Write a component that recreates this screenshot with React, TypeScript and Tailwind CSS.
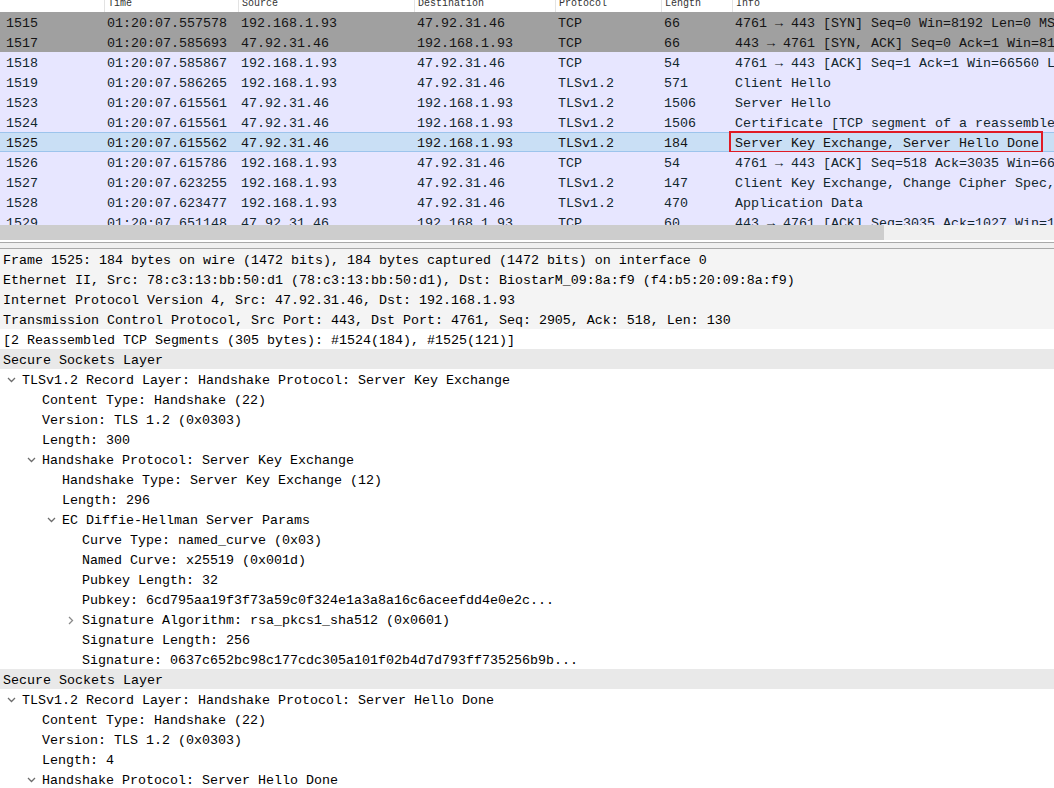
import React from "react";

type Pkt = { no: string; time: string; src: string; dst: string; proto: string; len: string; info: string; kind: "syn" | "tcp" | "sel" };

const pkts: Pkt[] = [
  { no: "1515", time: "01:20:07.557578", src: "192.168.1.93", dst: "47.92.31.46", proto: "TCP", len: "66", info: "4761 → 443 [SYN] Seq=0 Win=8192 Len=0 MSS=1460 WS=4 SACK_PERM=1", kind: "syn" },
  { no: "1517", time: "01:20:07.585693", src: "47.92.31.46", dst: "192.168.1.93", proto: "TCP", len: "66", info: "443 → 4761 [SYN, ACK] Seq=0 Ack=1 Win=8192 Len=0 MSS=1440", kind: "syn" },
  { no: "1518", time: "01:20:07.585867", src: "192.168.1.93", dst: "47.92.31.46", proto: "TCP", len: "54", info: "4761 → 443 [ACK] Seq=1 Ack=1 Win=66560 Len=0", kind: "tcp" },
  { no: "1519", time: "01:20:07.586265", src: "192.168.1.93", dst: "47.92.31.46", proto: "TLSv1.2", len: "571", info: "Client Hello", kind: "tcp" },
  { no: "1523", time: "01:20:07.615561", src: "47.92.31.46", dst: "192.168.1.93", proto: "TLSv1.2", len: "1506", info: "Server Hello", kind: "tcp" },
  { no: "1524", time: "01:20:07.615561", src: "47.92.31.46", dst: "192.168.1.93", proto: "TLSv1.2", len: "1506", info: "Certificate [TCP segment of a reassembled PDU]", kind: "tcp" },
  { no: "1525", time: "01:20:07.615562", src: "47.92.31.46", dst: "192.168.1.93", proto: "TLSv1.2", len: "184", info: "Server Key Exchange, Server Hello Done", kind: "sel" },
  { no: "1526", time: "01:20:07.615786", src: "192.168.1.93", dst: "47.92.31.46", proto: "TCP", len: "54", info: "4761 → 443 [ACK] Seq=518 Ack=3035 Win=66560 Len=0", kind: "tcp" },
  { no: "1527", time: "01:20:07.623255", src: "192.168.1.93", dst: "47.92.31.46", proto: "TLSv1.2", len: "147", info: "Client Key Exchange, Change Cipher Spec, Encrypted Handshake Message", kind: "tcp" },
  { no: "1528", time: "01:20:07.623477", src: "192.168.1.93", dst: "47.92.31.46", proto: "TLSv1.2", len: "470", info: "Application Data", kind: "tcp" },
  { no: "1529", time: "01:20:07.651148", src: "47.92.31.46", dst: "192.168.1.93", proto: "TCP", len: "60", info: "443 → 4761 [ACK] Seq=3035 Ack=1027 Win=17152 Len=0", kind: "tcp" },
];

type Node = { text: string; level: number; arrow?: "down" | "right"; bg?: "top" | "ssl" | "white" };

const tree: Node[] = [
  { text: "Frame 1525: 184 bytes on wire (1472 bits), 184 bytes captured (1472 bits) on interface 0", level: 0, bg: "top" },
  { text: "Ethernet II, Src: 78:c3:13:bb:50:d1 (78:c3:13:bb:50:d1), Dst: BiostarM_09:8a:f9 (f4:b5:20:09:8a:f9)", level: 0, bg: "top" },
  { text: "Internet Protocol Version 4, Src: 47.92.31.46, Dst: 192.168.1.93", level: 0, bg: "top" },
  { text: "Transmission Control Protocol, Src Port: 443, Dst Port: 4761, Seq: 2905, Ack: 518, Len: 130", level: 0, bg: "top" },
  { text: "[2 Reassembled TCP Segments (305 bytes): #1524(184), #1525(121)]", level: 0, bg: "white" },
  { text: "Secure Sockets Layer", level: 0, bg: "ssl" },
  { text: "TLSv1.2 Record Layer: Handshake Protocol: Server Key Exchange", level: 1, arrow: "down" },
  { text: "Content Type: Handshake (22)", level: 2 },
  { text: "Version: TLS 1.2 (0x0303)", level: 2 },
  { text: "Length: 300", level: 2 },
  { text: "Handshake Protocol: Server Key Exchange", level: 2, arrow: "down" },
  { text: "Handshake Type: Server Key Exchange (12)", level: 3 },
  { text: "Length: 296", level: 3 },
  { text: "EC Diffie-Hellman Server Params", level: 3, arrow: "down" },
  { text: "Curve Type: named_curve (0x03)", level: 4 },
  { text: "Named Curve: x25519 (0x001d)", level: 4 },
  { text: "Pubkey Length: 32", level: 4 },
  { text: "Pubkey: 6cd795aa19f3f73a59c0f324e1a3a8a16c6aceefdd4e0e2c...", level: 4 },
  { text: "Signature Algorithm: rsa_pkcs1_sha512 (0x0601)", level: 4, arrow: "right" },
  { text: "Signature Length: 256", level: 4 },
  { text: "Signature: 0637c652bc98c177cdc305a101f02b4d7d793ff735256b9b...", level: 4 },
  { text: "Secure Sockets Layer", level: 0, bg: "ssl" },
  { text: "TLSv1.2 Record Layer: Handshake Protocol: Server Hello Done", level: 1, arrow: "down" },
  { text: "Content Type: Handshake (22)", level: 2 },
  { text: "Version: TLS 1.2 (0x0303)", level: 2 },
  { text: "Length: 4", level: 2 },
  { text: "Handshake Protocol: Server Hello Done", level: 2, arrow: "down" },
];

const mono = { fontFamily: '"Liberation Mono", "DejaVu Sans Mono", monospace' };

function Arrow({ dir }: { dir: "down" | "right" }) {
  return dir === "down" ? (
    <svg width="9" height="6" viewBox="0 0 9 6" className="block">
      <path d="M1 1 L4.5 4.5 L8 1" fill="none" stroke="#6d6d6d" strokeWidth="1.3" />
    </svg>
  ) : (
    <svg width="6" height="9" viewBox="0 0 6 9" className="block ml-[1px]">
      <path d="M1 1 L4.5 4.5 L1 8" fill="none" stroke="#8a8a8a" strokeWidth="1.3" />
    </svg>
  );
}

const cols = "grid grid-cols-[104px_134px_176px_141px_106px_71px_1fr]";
const cell = "pl-[3px] overflow-hidden pt-[4px] leading-[16px]";

function PacketRow({ p }: { p: Pkt }) {
  const bg =
    p.kind === "syn"
      ? "bg-[#a0a0a0] text-[#141414]"
      : p.kind === "sel"
      ? "bg-[#c9dff5] text-[#141414] shadow-[inset_0_1px_0_#9cc4ec,inset_0_-1px_0_#9cc4ec]"
      : "bg-[#e7e6ff] text-[#12272e]";
  return (
    <div className={`relative ${cols} h-[20px] whitespace-nowrap ${bg}`}>
      <div className="pl-[6px] overflow-hidden pt-[4px] leading-[16px]">{p.no}</div>
      <div className={cell}>{p.time}</div>
      <div className={cell}>{p.src}</div>
      <div className={cell}>{p.dst}</div>
      <div className={cell}>{p.proto}</div>
      <div className={cell}>{p.len}</div>
      <div className={cell}>{p.info}</div>
      {p.kind === "sel" && (
        <span className="absolute left-[729px] w-[314px] -top-[1px] h-[22px] border-2 border-[#e01b24]" />
      )}
    </div>
  );
}

function TreeRow({ n }: { n: Node }) {
  const bg = n.bg === "ssl" ? "bg-[#e9e9e9]" : n.bg === "top" ? "bg-[#f4f4f4]" : "bg-white";
  const pad = n.level === 0 ? 3 : n.level * 20 - 18;
  return (
    <div className={`flex items-center h-[20px] pt-[4px] leading-[16px] whitespace-nowrap overflow-hidden ${bg}`} style={{ paddingLeft: pad }}>
      {n.level > 0 && (
        <span className="w-[20px] shrink-0 flex items-center pl-[5px] -mt-[2px]">{n.arrow && <Arrow dir={n.arrow} />}</span>
      )}
      <span>{n.text}</span>
    </div>
  );
}

export default function App() {
  return (
    <div className="w-[1054px] h-[788px] overflow-hidden bg-white text-[13.33px] flex flex-col" style={mono}>
      {/* Packet list */}
      <div className="h-[225px] shrink-0 overflow-hidden">
        <div className={`${cols} h-[12px] overflow-hidden bg-white text-[10px] text-[#333]`}>
          {["", "Time", "Source", "Destination", "Protocol", "Length", "Info"].map((h, i) => (
            <div key={i} className={`h-[12px] overflow-hidden ${i === 0 ? "pl-[6px]" : "pl-[3px] border-l border-[#e3e3e3]"}`}>
              <div className="leading-[12px] -mt-[2px]">{h}</div>
            </div>
          ))}
        </div>
        {pkts.map((p) => (
          <PacketRow key={p.no} p={p} />
        ))}
      </div>
      {/* Horizontal scrollbar */}
      <div className="h-[15px] shrink-0 bg-[#f0f0f0] flex">
        <div className="w-[884px] h-full bg-[#cdcdcd]" />
      </div>
      {/* Splitter */}
      <div className="h-[9px] shrink-0 bg-[#f0f0f0] border-t-2 border-t-white border-b border-b-[#a9a9a9] flex flex-col">
        <div className="h-[1px] bg-[#a9a9a9]" />
      </div>
      {/* Details tree */}
      <div className="text-[#000] flex flex-col">
        {tree.map((n, i) => (
          <TreeRow key={i} n={n} />
        ))}
      </div>
    </div>
  );
}
